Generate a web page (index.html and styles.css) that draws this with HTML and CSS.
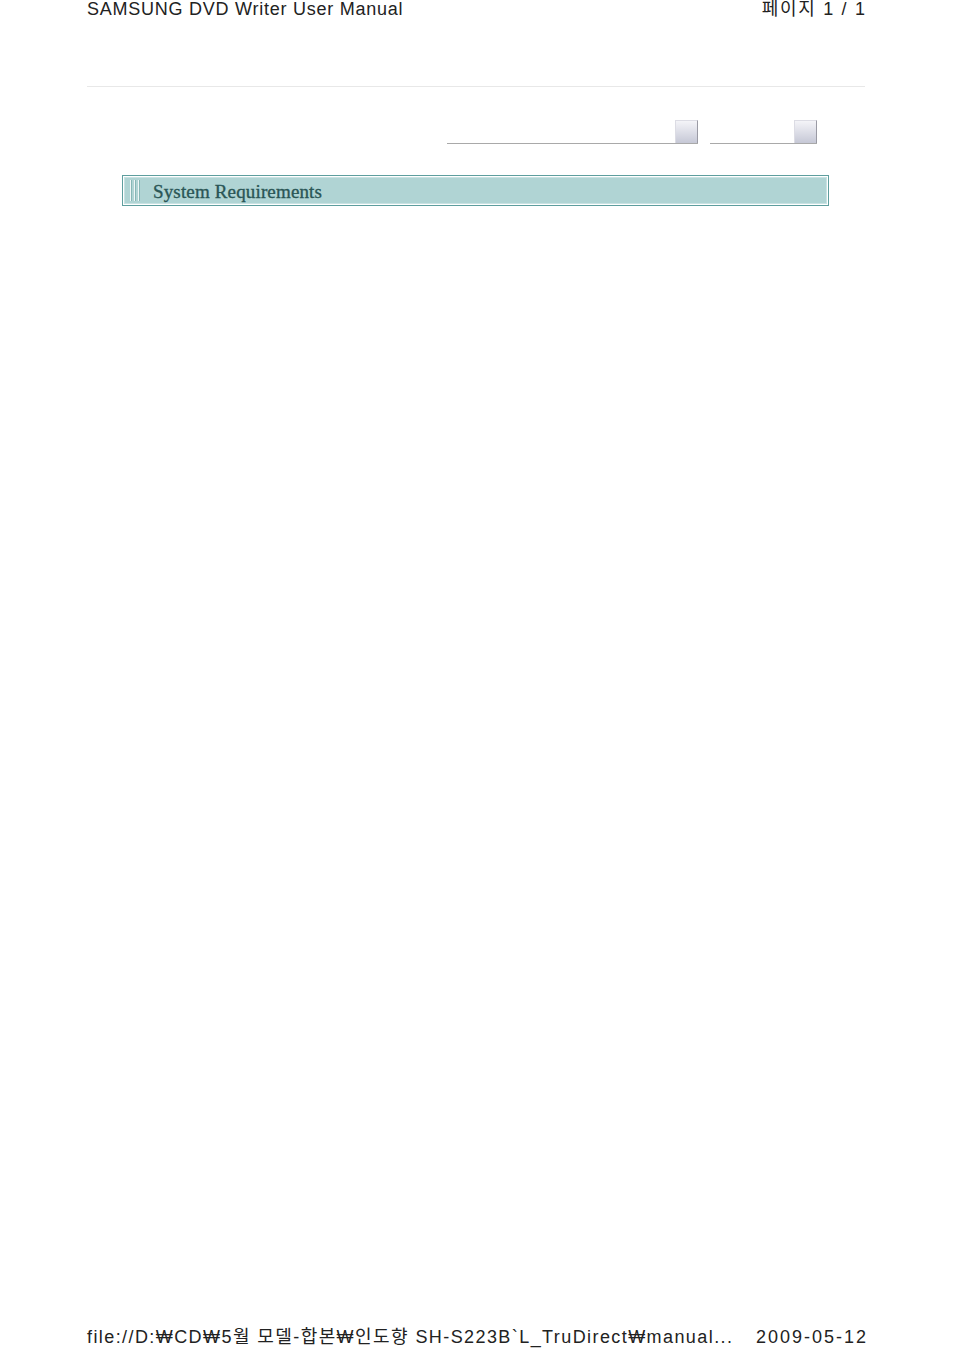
FILE: index.html
```html
<!DOCTYPE html>
<html lang="ko">
<head>
<meta charset="utf-8">
<title>SAMSUNG DVD Writer User Manual</title>
<link rel="stylesheet" href="styles.css">
</head>
<body>
<div class="page">
  <header class="top">
    <span class="title">SAMSUNG DVD Writer User Manual</span>
    <span class="pageno">페이지 1 / 1</span>
  </header>
  <div class="rule"></div>
  <div class="controls">
    <div class="combo combo-wide"><span class="field"></span><span class="btn"></span></div>
    <div class="combo combo-narrow"><span class="field"></span><span class="btn"></span></div>
  </div>
  <div class="banner">
    <div class="banner-inner">
      <span class="bars"><i></i><i></i><i></i></span>
      <span class="banner-title">System Requirements</span>
    </div>
  </div>
  <footer class="bottom">
    <span class="path">file://D:₩CD₩5월 모델-합본₩인도향 SH-S223B`L_TruDirect₩manual...</span>
    <span class="date">2009-05-12</span>
  </footer>
</div>
</body>
</html>
```
FILE: styles.css
```css
html, body {
  margin: 0;
  padding: 0;
  background: #ffffff;
}
.page {
  box-sizing: border-box;
  height: 1350px;
  padding: 0 89px 0 87px;
  display: flex;
  flex-direction: column;
  font-family: "Liberation Sans", "Noto Sans CJK KR", sans-serif;
  color: #222;
}
.top {
  display: flex;
  justify-content: space-between;
  align-items: baseline;
  font-size: 18px;
  line-height: 20px;
  margin-top: -1px;
}
.title { letter-spacing: 0.75px; }
.pageno { letter-spacing: 1.7px; margin-right: -1.7px; }
.rule {
  margin-top: 67px;
  border-top: 1px solid #e8e8e8;
}
.controls {
  display: flex;
  justify-content: flex-end;
  gap: 12px;
  margin: 33px 48px 0 0;
}
.combo {
  display: flex;
  align-items: flex-end;
  height: 23px;
  border-bottom: 1px solid #a9a9a9;
}
.combo-wide { width: 251px; }
.combo-narrow { width: 107px; }
.field { flex: 1; }
.btn {
  box-sizing: border-box;
  width: 23px;
  height: 23px;
  border-top: 1px solid #dcdce4;
  border-left: 1px solid #dcdce4;
  border-right: 1px solid #9a9aa4;
  background: linear-gradient(#f4f4f8, #c6c8d6);
}
.banner {
  margin: 31px 36px 0 35px;
  border: 1px solid #5e9e9e;
  padding: 1px;
  background: #ffffff;
}
.banner-inner {
  display: flex;
  align-items: center;
  height: 25px;
  background: #b0d4d4;
  border: 1px solid #c8e2e2;
}
.bars {
  display: flex;
  gap: 2px;
  margin-left: 5px;
  height: 21px;
}
.bars i {
  display: block;
  width: 1px;
  height: 100%;
  background: #eef6f6;
  border-right: 1px solid #86b6b6;
}
.banner-title {
  margin-left: 13px;
  font-family: "Liberation Serif", serif;
  font-size: 19px;
  color: #2a5656;
  letter-spacing: 0.15px;
  -webkit-text-stroke: 0.35px #2a5656;
  padding-top: 3px;
}
.bottom {
  margin-top: auto;
  display: flex;
  justify-content: space-between;
  align-items: baseline;
  font-size: 18px;
  line-height: 20px;
  margin-bottom: 3px;
}
.path { letter-spacing: 1.42px; }
.date { letter-spacing: 2px; margin-right: -3px; }
```
